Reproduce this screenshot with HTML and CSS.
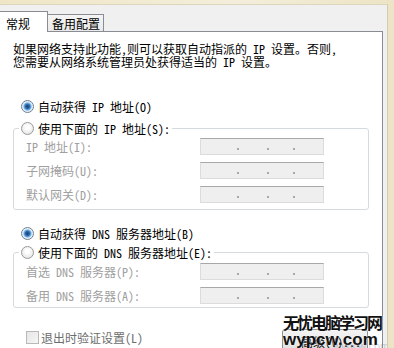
FILE: index.html
```html
<!DOCTYPE html>
<html lang="zh-CN">
<head>
  <meta charset="UTF-8" />
  <title>Internet 协议版本 4 (TCP/IPv4) 属性</title>
  <link rel="stylesheet" href="styles.css">
</head>
<body>
  <div class="dialog">
    <div class="tabs">
      <div class="tab active">常规</div>
      <div class="tab">备用配置</div>
    </div>

    <div class="panel">
      <p class="desc">如果网络支持此功能，则可以获取自动指派的 IP 设置。否则，<br>您需要从网络系统管理员处获得适当的 IP 设置。</p>

      <div class="opt opt-ip"><span class="radio on"></span>自动获得 IP 地址(O)</div>
      <fieldset class="group group-ip">
        <legend><span class="opt"><span class="radio"></span>使用下面的 IP 地址(S):</span></legend>
        <div class="field"><span class="label">IP 地址(I):</span><span class="ip"><i></i><i></i><i></i></span></div>
        <div class="field"><span class="label">子网掩码(U):</span><span class="ip"><i></i><i></i><i></i></span></div>
        <div class="field"><span class="label">默认网关(D):</span><span class="ip"><i></i><i></i><i></i></span></div>
      </fieldset>

      <div class="opt opt-dns"><span class="radio on"></span>自动获得 DNS 服务器地址(B)</div>
      <fieldset class="group group-dns">
        <legend><span class="opt"><span class="radio"></span>使用下面的 DNS 服务器地址(E):</span></legend>
        <div class="field"><span class="label">首选 DNS 服务器(P):</span><span class="ip"><i></i><i></i><i></i></span></div>
        <div class="field"><span class="label">备用 DNS 服务器(A):</span><span class="ip"><i></i><i></i><i></i></span></div>
      </fieldset>

      <div class="bottom">
        <div class="check"><span class="box"></span>退出时验证设置(L)</div>
        <div class="btn">高级(V)...</div>
      </div>
    </div>

    <!-- site watermark sits over the button -->
    <div class="watermark">
      <div class="wm-cn">无忧电脑学习网</div>
      <div class="wm-en">wypcw.com</div>
      <div class="wm-faint">wypcw.com</div>
    </div>
  </div>
</body>
</html>
```

FILE: styles.css
```css
body {
  margin: 0;
  width: 394px;
  height: 348px;
  overflow: hidden;
  background: linear-gradient(90deg, #efe6c6, #f3eedb 60%, #ece4c4);
  font-family: "Noto Sans CJK SC", "Liberation Sans", sans-serif;
  font-size: 12px;
  font-feature-settings: "hwid" 1;
  color: #000;
}
.dialog {
  position: relative;
  box-sizing: border-box;
  width: 388px;
  height: 344px;
  margin-top: 4px;
  padding: 7px 4px 0 0;
  overflow: hidden;
  background-color: #f0f0f0;
  border-top: 1px solid #ddd6bd;
  border-right: 1px solid #d2cbb2;
}
.tabs {
  display: flex;
  align-items: flex-end;
  margin-left: -1px;
  margin-top: -1px;
}
.tab {
  box-sizing: border-box;
  border: 1px solid #898c95;
  border-bottom: none;
  line-height: 15px;
}
.tab.active {
  position: relative;
  z-index: 1;
  width: 49px;
  height: 21px;
  margin-bottom: -1px;
  padding: 4px 0 0 6px;
  background-color: #fff;
}
.tab:not(.active) {
  width: 56px;
  height: 17px;
  padding: 1px 0 0 4px;
  border-left: none;
  background: linear-gradient(#f4f4f4, #e9e9e9);
}
.panel {
  box-sizing: border-box;
  height: 317px;
  margin-left: -1px;
  padding: 10px 0 0 13px;
  overflow: hidden;
  background-color: #fff;
  border: 1px solid #898c95;
  border-bottom: none;
}
.desc {
  margin: 0;
  line-height: 13px;
  white-space: nowrap;
}
.opt {
  display: flex;
  align-items: center;
  gap: 4px;
  height: 16px;
  white-space: nowrap;
}
.opt-ip {
  margin: 30px 0 0 8px;
}
.opt-dns {
  margin: 15px 0 0 8px;
}
.radio {
  box-sizing: border-box;
  width: 13px;
  height: 13px;
  border-radius: 50%;
  border: 1px solid #9a9a9a;
  background: radial-gradient(circle at 50% 40%, #ffffff 20%, #dcdcdc 100%);
}
.radio.on {
  border-color: #6e7f91;
  background: radial-gradient(circle, #1c416f 0, #2a63a6 2px, #6fb0e6 3.5px, #d8ecfa 4.5px, #f3f3f3 5.5px);
}
.group {
  box-sizing: border-box;
  width: 356px;
  margin: 0;
  padding: 0 0 6px;
  min-inline-size: 0;
  border: 1px solid #d5dadf;
  border-radius: 3px;
}
.group-ip {
  margin-top: 6px;
}
.group-dns {
  margin-top: 3px;
  padding-bottom: 3px;
}
.group legend {
  margin-left: 5px;
  padding: 0 2px;
}
.field {
  display: flex;
  align-items: center;
  height: 17px;
  margin-top: 7px;
  padding-left: 12px;
  color: #a0a0a0;
  white-space: nowrap;
}
.group-ip .field:first-of-type {
  margin-top: 2px;
}
.group-dns .field:first-of-type {
  margin-top: 3px;
}
.label {
  width: 174px;
}
.ip {
  box-sizing: border-box;
  display: flex;
  align-items: flex-end;
  width: 124px;
  height: 17px;
  padding-bottom: 4px;
  background-color: #efefef;
  border: 1px solid #dcdcdc;
  border-top-color: #a8a8a8;
}
.ip i {
  width: 2px;
  height: 2px;
  background-color: #a8a8a8;
}
.ip i:nth-child(1) { margin-left: 36px; }
.ip i:nth-child(2) { margin-left: 28px; }
.ip i:nth-child(3) { margin-left: 24px; }
.bottom {
  display: flex;
  justify-content: space-between;
  align-items: flex-start;
  width: 355px;
  margin-top: 21px;
}
.check {
  display: flex;
  align-items: center;
  gap: 2px;
  height: 16px;
  margin-left: 13px;
  color: #6d6d6d;
}
.box {
  box-sizing: border-box;
  width: 13px;
  height: 13px;
  border: 1px solid #b9b9b9;
  background: linear-gradient(135deg, #e6e6e6, #f6f6f6);
}
.btn {
  box-sizing: border-box;
  width: 86px;
  height: 23px;
  padding: 5px 0 0 18px;
  border: 1px solid #8f8f8f;
  border-radius: 3px;
  background: linear-gradient(#f4f4f4, #dedede);
  line-height: 13px;
}
.watermark {
  position: absolute;
  left: 283px;
  top: 309px;
  line-height: 1;
  white-space: nowrap;
}
.wm-cn {
  font-size: 16px;
  font-weight: 700;
  letter-spacing: -2px;
  color: #111;
  text-shadow: 0 0 2px #fff;
}
.wm-en {
  margin-top: 1px;
  font-family: "Liberation Sans", sans-serif;
  font-size: 17px;
  font-weight: 700;
  color: #111;
  text-shadow: 0 0 2px #fff;
}
.wm-faint {
  position: absolute;
  left: 50px;
  top: 27px;
  font-family: "Liberation Sans", sans-serif;
  font-size: 11px;
  color: rgba(120, 120, 140, 0.35);
}
```
